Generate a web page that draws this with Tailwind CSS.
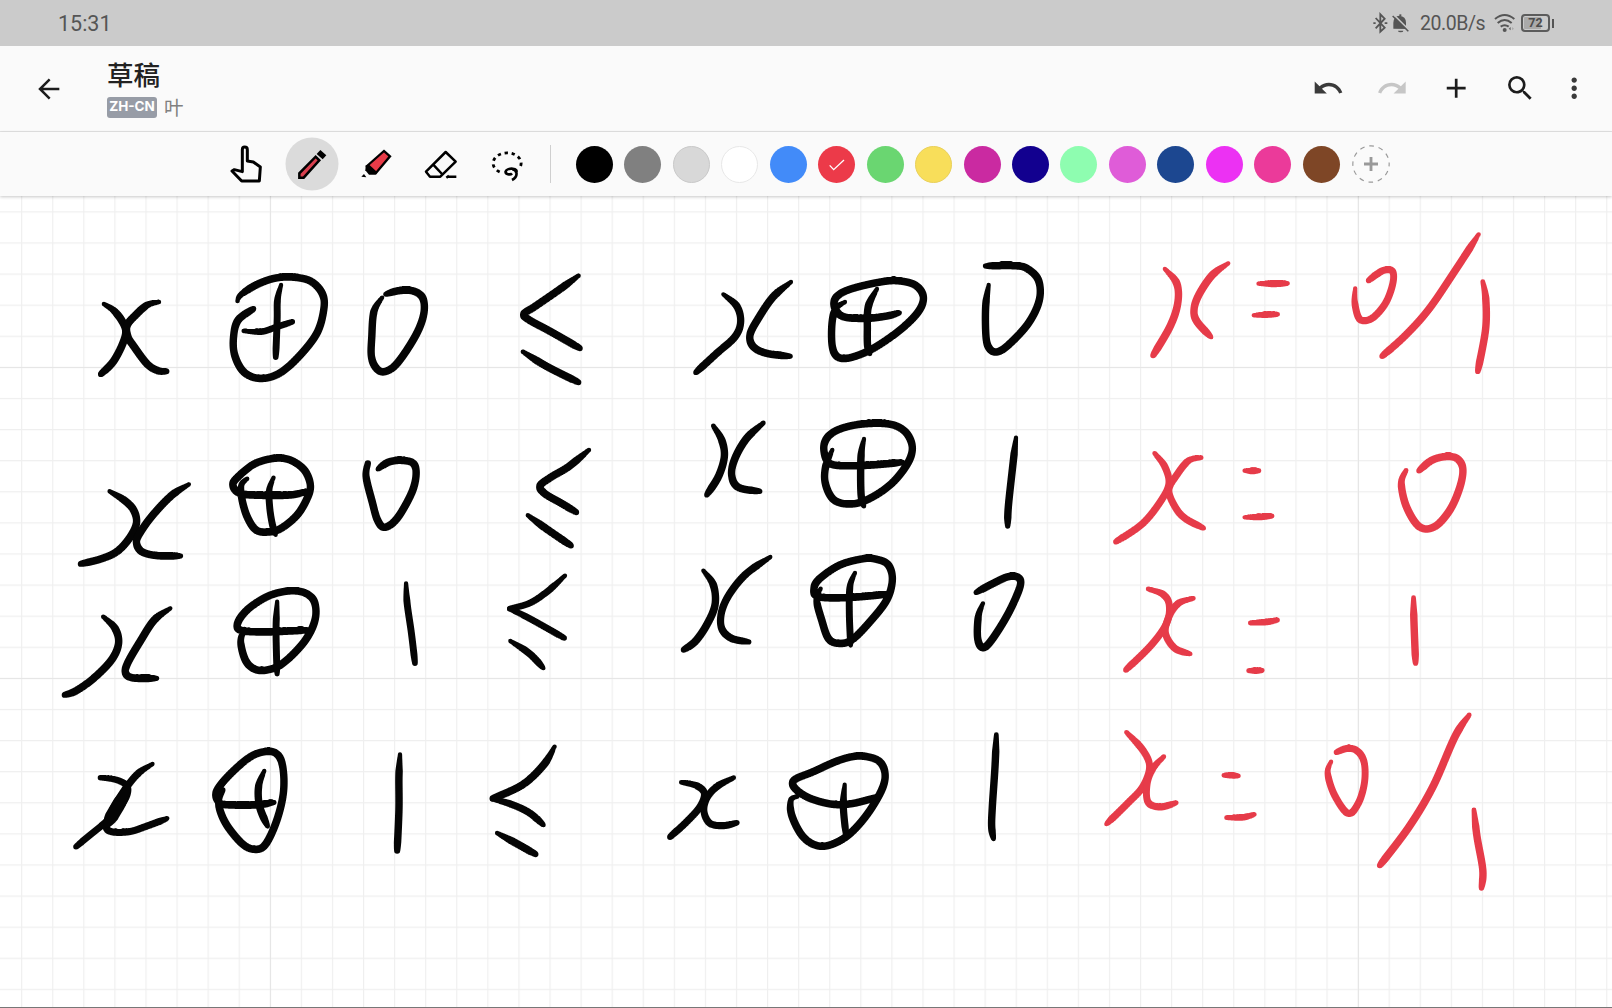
<!DOCTYPE html>
<html lang="zh-CN">
<head>
<meta charset="utf-8">
<title>草稿</title>
<script src="https://cdn.jsdelivr.net/npm/@tailwindcss/browser@4"></script>
</head>
<body class="flex h-[1008px] w-[1612px] flex-col overflow-hidden bg-white font-['Roboto','Noto_Sans_CJK_SC',sans-serif]">

<!-- Status bar -->
<div class="flex h-[46px] shrink-0 items-center justify-between bg-[#cbcbcb] pl-[58px] pr-[58px] text-[#555]">
  <span class="mt-[2px] text-[21.5px] leading-none">15:31</span>
  <div class="flex items-center">
    <svg class="h-[46px] w-[38px]" viewBox="246 0 114 138" fill="none" stroke="#555" stroke-width="5.5">
      <path d="M257 54L284 83L271 95V43L284 56L257 85M250 69.500h7M284 69.500h8" />
      <path d="M310 86V68q2-21 18-21q20 2 20 21v14l8 5z" fill="#555" stroke="none"/>
      <path d="M324 92a8 5 0 0 0 16 0z" fill="#555" stroke="none"/>
      <path d="M331 43v5" stroke-width="6"/>
      <path d="M312 45L358 91" stroke="#cbcbcb" stroke-width="5"/>
      <path d="M308 48L355 94" stroke-width="4.500"/>
    </svg>
    <span class="ml-[10px] mt-[2px] w-[65px] whitespace-nowrap text-[19.500px] leading-none tracking-[-0.45px]">20.0B/s</span>
    <svg class="ml-[9px] h-[46px] w-[22px]" viewBox="612 0 66 138" fill="none" stroke="#555" stroke-width="6">
      <path d="M615 57Q644 33 673 57M623 69Q644 51 665 69M632 80Q644 71 656 80"/>
      <circle cx="644" cy="90" r="6" fill="#555" stroke="none"/>
      <path d="M662 81v10l-6-5z" fill="#666" stroke="none"/><path d="M666 81l6 5l-6 5z" fill="#aaa" stroke="none"/>
    </svg>
    <div class="ml-[5px] flex h-[18px] w-[29px] items-center justify-center rounded-[4px] border-2 border-[#5c5c5c] bg-[linear-gradient(90deg,#aaa_72%,#cbcbcb_72%)] text-[12.500px] font-bold leading-none text-[#4c4c4c] shadow-[inset_0_0_0_1px_#cbcbcb]">72</div>
    <div class="ml-[2px] h-[9px] w-[2px] bg-[#555]"></div>
  </div>
</div>

<!-- App bar -->
<header class="flex h-[86px] shrink-0 items-center border-b border-[#e4e4e4] bg-[#fafafa] pl-[36.500px] pr-[21.500px]">
  <svg class="h-[24px] w-[25px]" viewBox="110 231 75 72" fill="none" stroke="#1c1c1c" stroke-width="7.500"><path d="M177 267H119M148 238L119 267L148 296"/></svg>
  <div class="ml-[45.500px] flex flex-col">
    <div class="h-[37px] font-['Noto_Sans_CJK_SC',sans-serif] text-[26.500px] font-medium leading-[27px] text-[#222]">草稿</div>
    <div class="flex h-[21px] items-center">
      <span class="flex h-[21px] w-[50px] items-center justify-center rounded-[3px] bg-[#979ca6] font-['Inter',sans-serif] text-[13.500px] font-bold leading-none text-white">ZH-CN</span>
      <span class="ml-[7px] font-['Noto_Sans_CJK_SC',sans-serif] text-[19.500px] leading-[20px] text-[#808080]">叶</span>
    </div>
  </div>
  <div class="ml-auto flex items-center">
    <svg class="mr-[32px] size-[32.400px]" viewBox="0 0 24 24" fill="#3a3a3a"><path d="M12.500 8c-2.650 0-5.050.99-6.900 2.600L2 7v9h9l-3.620-3.620c1.390-1.160 3.160-1.880 5.120-1.880 3.540 0 6.550 2.310 7.600 5.500l2.370-.78C21.080 11.030 17.150 8 12.500 8z"/></svg>
    <svg class="mr-[31.500px] size-[32.400px]" viewBox="0 0 24 24" fill="#c6c6c6"><path d="M18.400 10.600C16.550 8.990 14.150 8 11.500 8c-4.650 0-8.580 3.030-9.960 7.220L3.900 16c1.050-3.190 4.050-5.500 7.600-5.500 1.950 0 3.730.72 5.120 1.880L13 16h9V7l-3.600 3.600z"/></svg>
    <svg class="mr-[31.500px] size-[32.400px]" viewBox="0 0 24 24" fill="#1c1c1c"><path d="M19 13h-6v6h-2v-6H5v-2h6V5h2v6h6v2z"/></svg>
    <svg class="mr-[22px] size-[32.400px]" viewBox="0 0 24 24" fill="#1c1c1c"><path d="M15.500 14h-.79l-.28-.27A6.471 6.471 0 0 0 16 9.500 6.500 6.500 0 1 0 9.500 16c1.610 0 3.090-.59 4.230-1.570l.27.28v.79l5 4.990L20.490 19l-4.990-5zm-6 0C7.010 14 5 11.990 5 9.500S7.010 5 9.500 5 14 7.010 14 9.500 11.990 14 9.500 14z"/></svg>
    <svg class="size-[32.400px]" viewBox="0 0 24 24" fill="#3a3a3a"><path d="M12 8c1.100 0 2-.9 2-2s-.9-2-2-2-2 .9-2 2 .9 2 2 2zm0 2c-1.100 0-2 .9-2 2s.9 2 2 2 2-.9 2-2-.9-2-2-2zm0 6c-1.100 0-2 .9-2 2s.9 2 2 2 2-.9 2-2-.9-2-2-2z"/></svg>
  </div>
</header>

<!-- Tools and palette -->
<div class="relative z-10 flex h-[64px] shrink-0 items-center bg-[#fafafa] pl-[220px] shadow-[0_1px_3px_rgba(0,0,0,0.22)]">
  <div class="flex gap-[10.670px]">
    <svg class="size-[54px]" viewBox="60 52 162 162" fill="none" stroke="#000" stroke-width="9" stroke-linejoin="round"><path d="M127 156V90Q127 82 134 82Q142 82 142 90V124L160 127L181 142L178 184H125L96 154L103 150Z"/></svg>
    <svg class="size-[54px]" viewBox="255 52 162 162"><circle cx="336" cy="133" r="79.500" fill="#dbdbdb"/><path d="M298 174V161L347 111L358 122L311 174Z" fill="#d9404f" stroke="#000" stroke-width="7.500"/><path d="M350 103L361 91L379 107L368 119Z"/></svg>
    <svg class="size-[54px]" viewBox="449 52 162 162"><path d="M503 139L554 94L572 110L530 160Z" fill="#e83b48" stroke="#000" stroke-width="7"/><path d="M499 138L498 152L509 165H529L534 158L508 134Z"/><path d="M486 171L494 163L501 173Z"/></svg>
    <svg class="size-[54px]" viewBox="643 52 162 162" fill="none" stroke="#000" stroke-width="7.500"><path d="M738 97L768 126L722 171H691L679 156Z" stroke-linejoin="round"/><path d="M700 134L727 163"/><path d="M745 171H770M740 174L748 168" /></svg>
    <svg class="size-[54px]" viewBox="837 52 162 162" fill="none" stroke="#000" stroke-width="8.500"><path d="M899 157A42 31 0 1 1 960 143" stroke-dasharray="10 11"/><path d="M947 162C960 143 921 144 917 155C915 164 931 167 936 161M937 149C953 151 955 171 936 181" stroke-width="8"/></svg>
  </div>
  <div class="ml-[17px] h-[38px] w-px bg-[#cfcfcf]"></div>
  <div class="ml-[25px] flex gap-[11.490px]">
    <span class="size-[37px] rounded-full bg-black"></span>
    <span class="size-[37px] rounded-full bg-[#808080]"></span>
    <span class="size-[37px] rounded-full border border-[#c9c9c9] bg-[#d8d8d8]"></span>
    <span class="size-[37px] rounded-full border border-[#e8e8e8] bg-white"></span>
    <span class="size-[37px] rounded-full bg-[#428bf9]"></span>
    <span class="flex size-[37px] items-center justify-center rounded-full bg-[#ec3a49]"><svg class="size-[37px]" viewBox="0 0 111 111" fill="none" stroke="#fff" stroke-width="4"><path d="M35 58L47 71L78 42"/></svg></span>
    <span class="size-[37px] rounded-full bg-[#6ad671]"></span>
    <span class="size-[37px] rounded-full border border-[#e9d05a] bg-[#f8de5a]"></span>
    <span class="size-[37px] rounded-full bg-[#ca2aa1]"></span>
    <span class="size-[37px] rounded-full bg-[#12008f]"></span>
    <span class="size-[37px] rounded-full bg-[#8efdb0]"></span>
    <span class="size-[37px] rounded-full bg-[#df5cd8]"></span>
    <span class="size-[37px] rounded-full bg-[#1c4790]"></span>
    <span class="size-[37px] rounded-full bg-[#ec31f3]"></span>
    <span class="size-[37px] rounded-full bg-[#eb3a9a]"></span>
    <span class="size-[37px] rounded-full bg-[#7e4626]"></span>
  </div>
  <svg class="ml-[12.500px] size-[38px]" viewBox="-57 -57 114 114" fill="none" stroke="#999"><circle r="54.500" stroke-width="3.500" stroke-dasharray="14.270 14.270" stroke-dashoffset="7"/><path d="M-21 0H21M0-21V21" stroke-width="8.500"/></svg>
</div>

<!-- Drawing canvas -->
<main class="h-[812px] shrink-0 border-b border-[#777] bg-white">
  <svg class="block h-[811px] w-[1612px]" viewBox="0 196 1612 811">
    <defs><pattern id="grid" x="21.100" y="211.300" width="31.080" height="31.100" patternUnits="userSpaceOnUse"><path d="M.6 0V31.100M0 .6H31.080" stroke="#efefef" stroke-width="1.100" fill="none"/></pattern></defs>
    <rect y="196" width="1612" height="811" fill="url(#grid)"/>
    <path d="M270.500 196V1007M1358.500 196V1007M0 367.500H1612M0 678.500H1612" stroke="#e6e6e6"/>
    <g id="ink"></g>
  </svg>
</main>

<script>
// Each block of ink: origin, scale and colour, then one stroke per line as x,y points.
// An optional "w=a,m,b" prefix gives the start, middle and end widths.
const blocks = [
[40,240,2.8,3,'#050505',`
179,192 205,210 228,240 240,272 232,310 205,365 170,403
333,186 300,195 268,225 244,256 246,290 262,318 300,372 330,392 355,394
553,183 562,165 605,135 660,114 715,112 760,125 790,160 795,205 775,280 720,355 665,403 612,415 570,395 545,345 542,290 555,240 598,206
w=4,6.5,5 675,135 665,180 664,240 660,352
w=4,6,5 570,273 620,275 660,262 707,245
w=4,7,4 958,173 935,215 929,290 928,350 942,385 965,395 1000,370 1050,290 1074,225 1072,175 1045,153 1005,152 967,163
1508,107 1450,152 1385,200 1355,222 1370,240 1430,275 1512,325
1352,335 1420,380 1508,427
195,754 235,780 262,810 270,850 250,895 215,935 170,957 113,972
w=4,7,4 417,733 370,765 320,820 285,870 270,905 285,935 330,947 395,948
580,716 564,735 565,775 580,830 605,870 640,876 675,865 720,825 748,775 757,735 740,690 700,660 655,655 600,672 555,710 540,735 560,760 620,766 700,765 745,755
w=4,6.5,3.5 654,713 642,750 643,800 650,850 660,885
w=6,7,3.5 918,670 913,710 930,785 945,840 965,862 1000,835 1040,760 1053,705 1045,670 1010,661 975,667 945,688
1537,630 1480,680 1430,712 1400,738 1415,762 1460,790 1502,817
1366,826 1420,868 1487,917`],
[40,560,2.8,3,'#050505',`
177,170 210,205 220,250 200,300 150,355 100,393 68,405
w=4,7,4 365,145 320,180 280,245 245,310 240,340 262,354 328,355
w=5,7,4.5 572,208 562,245 575,300 600,327 635,330 680,310 740,245 770,180 768,125 740,98 695,93 640,108 585,145 555,185 560,210 620,216 700,213 752,210
w=4,6.5,4 664,125 661,200 662,280 664,343
w=4,6.5,5 1025,70 1028,130 1040,220 1050,310
w=4,6,5 1470,47 1420,95 1370,130 1315,146
w=5,6,5 1315,146 1370,175 1468,234
w=4,6.5,3.5 1317,243 1370,280 1410,325
w=5,6,5 169,653 215,660 245,680 240,715 210,760 180,790 140,825 100,861
w=4,6.5,3.5 315,612 275,640 240,685 205,745 185,795 200,815 250,815 300,798 357,775
w=6,13,6 246,683 222,730 188,792
w=5,7,3.5 512,690 500,730 520,790 565,850 600,868 630,855 660,790 680,710 682,640 670,590 640,574 590,590 530,645 494,695 500,725 520,734 600,735 657,727
w=4,7,3.5 628,633 612,680 615,740 638,800
w=4,7,5.5 1008,583 1005,650 1005,750 1000,873
w=4,7,6 1441,560 1410,615 1350,675 1267,716
w=5,6.5,4 1267,716 1320,733 1370,758 1410,795
1280,819 1330,848 1388,883`],
[600,240,3,3,'#050505',`
w=4,6.8,4.5 370,163 410,198 422,245 405,290 350,340 287,398
w=4,7,4 573,126 520,170 475,235 450,285 460,320 500,340 572,349
w=4,7,3.5 735,186 708,205 696,250 697,320 715,352 755,352 820,325 900,270 955,215 970,170 945,135 890,122 830,128 750,148 710,170 703,200 730,230 800,235 860,228 900,218
w=4,7,4 831,147 805,200 802,270 803,320 810,342
w=4,7,4 1166,135 1157,200 1158,290 1168,325 1190,336 1225,315 1285,250 1318,180 1315,120 1280,85 1240,77 1155,78
w=4.5,7,4.5 340,558 365,600 373,650 355,710 320,765
w=4.5,7,4.5 490,549 440,595 405,655 395,705 415,742 480,754
w=4,7,4.5 697,630 677,680 676,730 700,778 745,792 800,780 870,735 920,675 937,625 920,580 880,555 820,550 750,558 695,580 672,615 680,660 710,676 800,676 908,667
w=4,7,3.5 792,597 783,650 783,760 792,800
w=4,7,4 1248,593 1238,680 1225,800 1223,860`],
[600,540,3,3,'#050505',`
w=4,7,5 310,92 340,135 345,195 320,255 285,305 250,330
w=4,6.8,4 511,51 440,100 390,160 365,215 365,265 395,295 448,306
w=4,7,6 662,146 650,180 665,240 685,295 715,310 755,300 810,245 860,180 877,120 865,75 830,58 790,56 720,75 660,115 642,145 655,170 740,173 860,163
w=4,6.5,3.5 765,99 750,140 748,220 752,317
w=4,7,4 1149,190 1135,230 1133,295 1148,323 1175,300 1225,220 1260,140 1255,113 1225,110 1180,130 1127,158
w=4.5,6.5,5.5 244,727 290,737 313,760 300,800 260,845 210,891
w=4.500,6.5,4 401,713 350,740 320,775 312,815 330,850 370,857 413,848
w=4,7,6 592,770 573,780 575,825 605,885 645,915 690,915 745,885 800,825 845,750 855,700 835,662 780,648 720,660 640,695 583,720 585,745 630,775 700,793 760,790 830,772
w=4,6.8,5 734,734 730,800 738,885
w=4.500,7,3.5 1189,584 1185,680 1177,800 1175,860 1181,898`],
[1080,220,2.947,3,'#e63b49',`
w=4,7,5 250,147 285,190 288,250 265,320 215,407
w=4,7,3.5 437,130 390,165 350,225 336,270 345,305 387,352
w=4,6.5,3.5 526,191 570,191 613,190
w=4,6,4 512,286 550,284 583,283
w=4,6.500,5 811,205 810,250 825,298 860,295 900,250 922,190 920,153 890,153 850,182
w=4,6.800,5 1175,43 1110,145 1030,265 960,345 890,409
w=4.500,7,4.500 1187,185 1196,240 1195,330 1172,455
w=4.500,6.500,5 220,700 250,740 262,790 240,840 185,910 105,966
w=4.500,6.500,4 357,713 320,722 285,765 262,810 280,860 310,895 365,925
w=4,6,4 485,752 505,753 528,752
w=4,6,4 485,892 530,891 567,888
w=4.500,7,4.500 961,751 947,790 962,860 1000,920 1045,920 1090,870 1120,800 1128,745 1110,715 1075,710 1035,722 998,753`],
[1080,560,2.947,3,'#e63b49',`
w=4.500,6.500,5 201,87 245,103 263,135 255,190 210,255 135,330
w=4.500,6.500,3.500 334,115 290,130 262,170 252,220 280,265 326,282
w=4.500,6,4.500 502,189 550,186 582,180
w=4.500,6,4 497,332 518,332 538,331
w=4.500,7,4.500 983,113 984,180 989,310
w=4.500,6.500,3.500 137,517 185,570 205,620 185,680 140,730 77,793
w=4.500,6.500,3.500 247,590 215,625 198,670 200,725 235,741 285,728
w=4.500,6,3.500 424,646 448,646 468,648
w=4.500,6,3.500 432,773 480,772 515,763
w=4,6.500,5 740,605 730,640 750,705 790,760 820,730 838,670 838,610 820,575 790,565 755,577
w=4.500,7,5 1147,465 1105,530 1040,680 970,800 883,917
w=4.500,7,4.500 1161,750 1170,830 1187,930 1183,985`]];

const ink = document.getElementById('ink');
function smooth(p) {
  const out = [];
  for (let i = 0; i < p.length - 1; i++) {
    const a = p[Math.max(i-1,0)], b = p[i], c = p[i+1], d = p[Math.min(i+2,p.length-1)];
    for (let k = 0; k < 14; k++) {
      const t = k/14, t2 = t*t, t3 = t2*t;
      out.push([0,1].map(j => .5*(2*b[j] + (c[j]-a[j])*t + (2*a[j]-5*b[j]+4*c[j]-d[j])*t2 + (3*b[j]-a[j]-3*c[j]+d[j])*t3)));
    }
  }
  out.push(p[p.length-1]);
  return out;
}
function circle(x, y, r) {
  return `M${x-r} ${y}a${r} ${r} 0 1 1 ${2*r} 0a${r} ${r} 0 1 1 ${-2*r} 0Z`;
}
for (const [ox, oy, sx, sy, color, lines] of blocks) {
  for (const line of lines.trim().split('\n')) {
    const parts = line.trim().split(' ');
    let w = [4.2, 7, 5.2];
    if (parts[0].startsWith('w=')) w = parts.shift().slice(2).split(',').map(Number);
    w = [w[0] + .3, w[1] + .5, w[2] + .3];
    const pts = smooth(parts.map(s => s.split(',').map(Number)).map(([x, y]) => [ox + x/sx, oy + y/sy]));
    const len = [0];
    for (let i = 1; i < pts.length; i++) len.push(len[i-1] + Math.hypot(pts[i][0]-pts[i-1][0], pts[i][1]-pts[i-1][1]));
    const total = len[len.length-1], ramp = Math.min(17, total*.45), tail = Math.min(9, total*.35);
    const radius = l => {
      const s = Math.min(1, l/ramp), e = Math.min(1, (total-l)/tail);
      return Math.min(w[0] + (w[1]-w[0])*s, w[2] + (w[1]-w[2])*Math.sqrt(e)) / 2;
    };
    let d = '';
    for (let l = 0; l <= total; l += .4) {
      let i = 1;
      while (i < len.length-1 && len[i] < l) i++;
      const t = (l-len[i-1])/((len[i]-len[i-1])||1);
      const x = pts[i-1][0] + (pts[i][0]-pts[i-1][0])*t, y = pts[i-1][1] + (pts[i][1]-pts[i-1][1])*t;
      d += circle(+x.toFixed(2), +y.toFixed(2), +radius(l).toFixed(2));
    }
    const el = document.createElementNS('http://www.w3.org/2000/svg', 'path');
    el.setAttribute('d', d);
    el.setAttribute('fill', color);
    ink.appendChild(el);
  }
}
</script>
</body>
</html>
